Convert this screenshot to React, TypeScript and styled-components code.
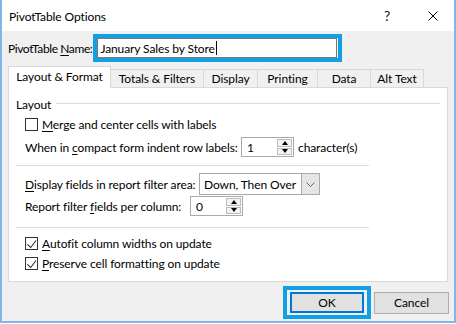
import React from "react";
import styled, { createGlobalStyle } from "styled-components";

const Global = createGlobalStyle`
  html, body { margin: 0; padding: 0; background: #ffffff; }
  body { font-family: "Lato", "Liberation Sans", sans-serif; font-size: 12px; color: #000; letter-spacing: -0.1px; }
  * { box-sizing: border-box; }
`;

const Window = styled.div`
  width: 456px;
  height: 323px;
  border: 2px solid #80b6ea;
  border-top: none;
  display: flex;
  flex-direction: column;
  background: #f0f0f0;
`;

const TitleBar = styled.div`
  height: 31px;
  background: #ffffff;
  display: flex;
  align-items: center;
  padding-left: 7px;
  flex-shrink: 0;
`;

const Title = styled.div`
  flex: 1;
  font-size: 12px;
  margin-top: 1px;
`;

const HelpGlyph = styled.div`
  width: 14px;
  font-size: 14px;
  margin-right: 34px;
  text-align: center;
  color: #111;
`;

const CloseBox = styled.div`
  width: 10px;
  height: 10px;
  margin-right: 16px;
  display: flex;
`;

const Body = styled.div`
  flex: 1;
  display: flex;
  flex-direction: column;
  padding: 3px 6px 0 6px;
`;

const NameRow = styled.div`
  display: flex;
  align-items: center;
  height: 28px;
  flex-shrink: 0;
`;

const NameLabel = styled.div`
  flex-shrink: 0;
  white-space: nowrap;
  letter-spacing: -0.4px;
  margin-right: 1px;
`;

const Highlight = styled.div`
  border: 4px solid #12a0e4;
  display: flex;
  flex-shrink: 0;
`;

const NameHighlight = styled(Highlight)`
  width: 249px;
  height: 28px;
  padding-right: 1px;
`;

const NameInput = styled.div`
  flex: 1;
  border: 1px solid #7a7a7a;
  background: #fff;
  display: flex;
  align-items: center;
  padding-left: 2px;
  white-space: nowrap;
`;

const Caret = styled.span`
  display: inline-block;
  width: 1px;
  height: 14px;
  background: #000;
  margin-left: 1px;
`;

const U = styled.span`
  text-decoration: underline;
  text-underline-offset: 2px;
`;

const TabStrip = styled.div`
  display: flex;
  align-items: flex-end;
  height: 21px;
  margin-top: 4px;
  flex-shrink: 0;
`;

const Tab = styled.div<{ $w: number; $active?: boolean }>`
  width: ${(p) => p.$w}px;
  height: ${(p) => (p.$active ? 22 : 18)}px;
  margin-bottom: ${(p) => (p.$active ? -1 : 0)}px;
  position: relative;
  z-index: ${(p) => (p.$active ? 1 : 0)};
  background: ${(p) => (p.$active ? "#ffffff" : "#f0f0f0")};
  border: 1px solid #d9d9d9;
  border-bottom: none;
  border-left-width: ${(p) => (p.$active ? 1 : 0)}px;
  display: flex;
  align-items: center;
  justify-content: center;
  padding-bottom: ${(p) => (p.$active ? 2 : 0)}px;
  flex-shrink: 0;
  white-space: nowrap;
`;

const Panel = styled.div`
  width: 440px;
  height: 195px;
  background: #ffffff;
  border: 1px solid #d9d9d9;
  display: flex;
  flex-direction: column;
  padding: 8px 0 0 7px;
  flex-shrink: 0;
`;

const GroupHeader = styled.div`
  height: 16px;
  display: flex;
  align-items: center;
  width: 424px;
`;

const GroupLine = styled.div`
  flex: 1;
  height: 1px;
  background: #dcdcdc;
  margin-left: 5px;
  margin-top: -1px;
`;

const Row = styled.div<{ $mt: number; $h: number }>`
  display: flex;
  align-items: center;
  margin-top: ${(p) => p.$mt}px;
  height: ${(p) => p.$h}px;
  padding-left: 9px;
  flex-shrink: 0;
`;

const Separator = styled.div<{ $mt: number }>`
  width: 353px;
  height: 1px;
  background: #dcdcdc;
  margin-top: ${(p) => p.$mt}px;
  flex-shrink: 0;
`;

const Label = styled.div<{ $w?: number }>`
  ${(p) => (p.$w ? `width: ${p.$w}px; flex-shrink: 0;` : "")}
  white-space: nowrap;
`;

const Box = styled.div`
  width: 13px;
  height: 13px;
  border: 1px solid #333333;
  background: #fff;
  margin-right: 4px;
  flex-shrink: 0;
  display: flex;
`;

const SpinBox = styled.div`
  width: 53px;
  height: 20px;
  border: 1px solid #a9a9a9;
  background: #fff;
  display: flex;
  flex-shrink: 0;
`;

const SpinValue = styled.div`
  flex: 1;
  display: flex;
  align-items: center;
  padding-left: 5px;
`;

const SpinButtons = styled.div`
  width: 16px;
  display: flex;
  flex-direction: column;
  padding: 1px 1px 1px 0;
  gap: 1px;
`;

const SpinButton = styled.div`
  flex: 1;
  border: 1px solid #bcbcbc;
  background: #f3f3f3;
  display: flex;
  align-items: center;
  justify-content: center;
`;

const Arrow = styled.div<{ $up?: boolean }>`
  width: 0;
  height: 0;
  border-left: 3px solid transparent;
  border-right: 3px solid transparent;
  ${(p) => (p.$up ? "border-bottom: 4px solid #000;" : "border-top: 4px solid #000;")}
`;

const After = styled.div`
  margin-left: 4px;
  white-space: nowrap;
`;

const Select = styled.div`
  width: 121px;
  height: 22px;
  border: 1px solid #a9a9a9;
  background: #fff;
  display: flex;
  flex-shrink: 0;
`;

const SelectText = styled.div`
  flex: 1;
  display: flex;
  align-items: center;
  padding-left: 4px;
  white-space: nowrap;
`;

const SelectButton = styled.div`
  width: 18px;
  background: #e5e5e5;
  border-left: 1px solid #a9a9a9;
  display: flex;
  align-items: center;
  justify-content: center;
`;

const Footer = styled.div`
  display: flex;
  justify-content: flex-end;
  align-items: center;
  margin-top: 4px;
  width: 441px;
  flex-shrink: 0;
`;

const OkHighlight = styled(Highlight)`
  width: 88px;
  height: 33px;
  padding: 2px 3px;
`;

const Button = styled.div<{ $default?: boolean }>`
  width: 74px;
  height: 21px;
  background: #e1e1e1;
  border: ${(p) => (p.$default ? "2px solid #0078d7" : "1px solid #adadad")};
  display: flex;
  align-items: center;
  justify-content: center;
  flex-shrink: 0;
`;

const CancelButton = styled(Button)`
  margin-left: 3px;
  width: 75px;
  height: 22px;
`;

function Check({ checked }: { checked?: boolean }) {
  return (
    <Box>
      {checked && (
        <svg width="11" height="11" viewBox="0 0 11 11">
          <polyline points="1.3,6.3 4.7,9.5 10,2.5" fill="none" stroke="#333" strokeWidth="1.1" />
        </svg>
      )}
    </Box>
  );
}

function Spin({ value }: { value: string }) {
  return (
    <SpinBox>
      <SpinValue>{value}</SpinValue>
      <SpinButtons>
        <SpinButton>
          <Arrow $up />
        </SpinButton>
        <SpinButton>
          <Arrow />
        </SpinButton>
      </SpinButtons>
    </SpinBox>
  );
}

export default function App() {
  return (
    <>
      <Global />
      <Window>
        <TitleBar>
          <Title>PivotTable Options</Title>
          <HelpGlyph>?</HelpGlyph>
          <CloseBox>
            <svg width="10" height="10" viewBox="0 0 10 10">
              <path d="M0.5 0.5 L9.5 9.5 M9.5 0.5 L0.5 9.5" stroke="#000" strokeWidth="1" fill="none" />
            </svg>
          </CloseBox>
        </TitleBar>
        <Body>
          <NameRow>
            <NameLabel>
              PivotTable <U>N</U>ame:
            </NameLabel>
            <NameHighlight>
              <NameInput>
                January Sales by Store
                <Caret />
              </NameInput>
            </NameHighlight>
          </NameRow>
          <TabStrip>
            <Tab $w={103} $active>
              Layout &amp; Format
            </Tab>
            <Tab $w={93}>Totals &amp; Filters</Tab>
            <Tab $w={54}>Display</Tab>
            <Tab $w={60}>Printing</Tab>
            <Tab $w={53}>Data</Tab>
            <Tab $w={53}>Alt Text</Tab>
          </TabStrip>
          <Panel>
            <GroupHeader>
              Layout
              <GroupLine />
            </GroupHeader>
            <Row $mt={4} $h={16}>
              <Check />
              <Label>
                <U>M</U>erge and center cells with labels
              </Label>
            </Row>
            <Row $mt={5} $h={20}>
              <Label $w={216}>
                When in <U>c</U>ompact form indent row labels:
              </Label>
              <Spin value="1" />
              <After>character(s)</After>
            </Row>
            <Separator $mt={8} />
            <Row $mt={7} $h={22}>
              <Label $w={174}>
                <U>D</U>isplay fields in report filter area:
              </Label>
              <Select>
                <SelectText>Down, Then Over</SelectText>
                <SelectButton>
                  <svg width="9" height="5" viewBox="0 0 9 5">
                    <polyline points="0.5,0.5 4.5,4.5 8.5,0.5" fill="none" stroke="#666" strokeWidth="1" />
                  </svg>
                </SelectButton>
              </Select>
            </Row>
            <Row $mt={1} $h={20}>
              <Label $w={165}>
                Report filter <U>f</U>ields per column:
              </Label>
              <Spin value="0" />
            </Row>
            <Separator $mt={11} />
            <Row $mt={7} $h={16}>
              <Check checked />
              <Label>
                <U>A</U>utofit column widths on update
              </Label>
            </Row>
            <Row $mt={4} $h={16}>
              <Check checked />
              <Label>
                <U>P</U>reserve cell formatting on update
              </Label>
            </Row>
          </Panel>
          <Footer>
            <OkHighlight>
              <Button $default>OK</Button>
            </OkHighlight>
            <CancelButton>Cancel</CancelButton>
          </Footer>
        </Body>
      </Window>
    </>
  );
}
